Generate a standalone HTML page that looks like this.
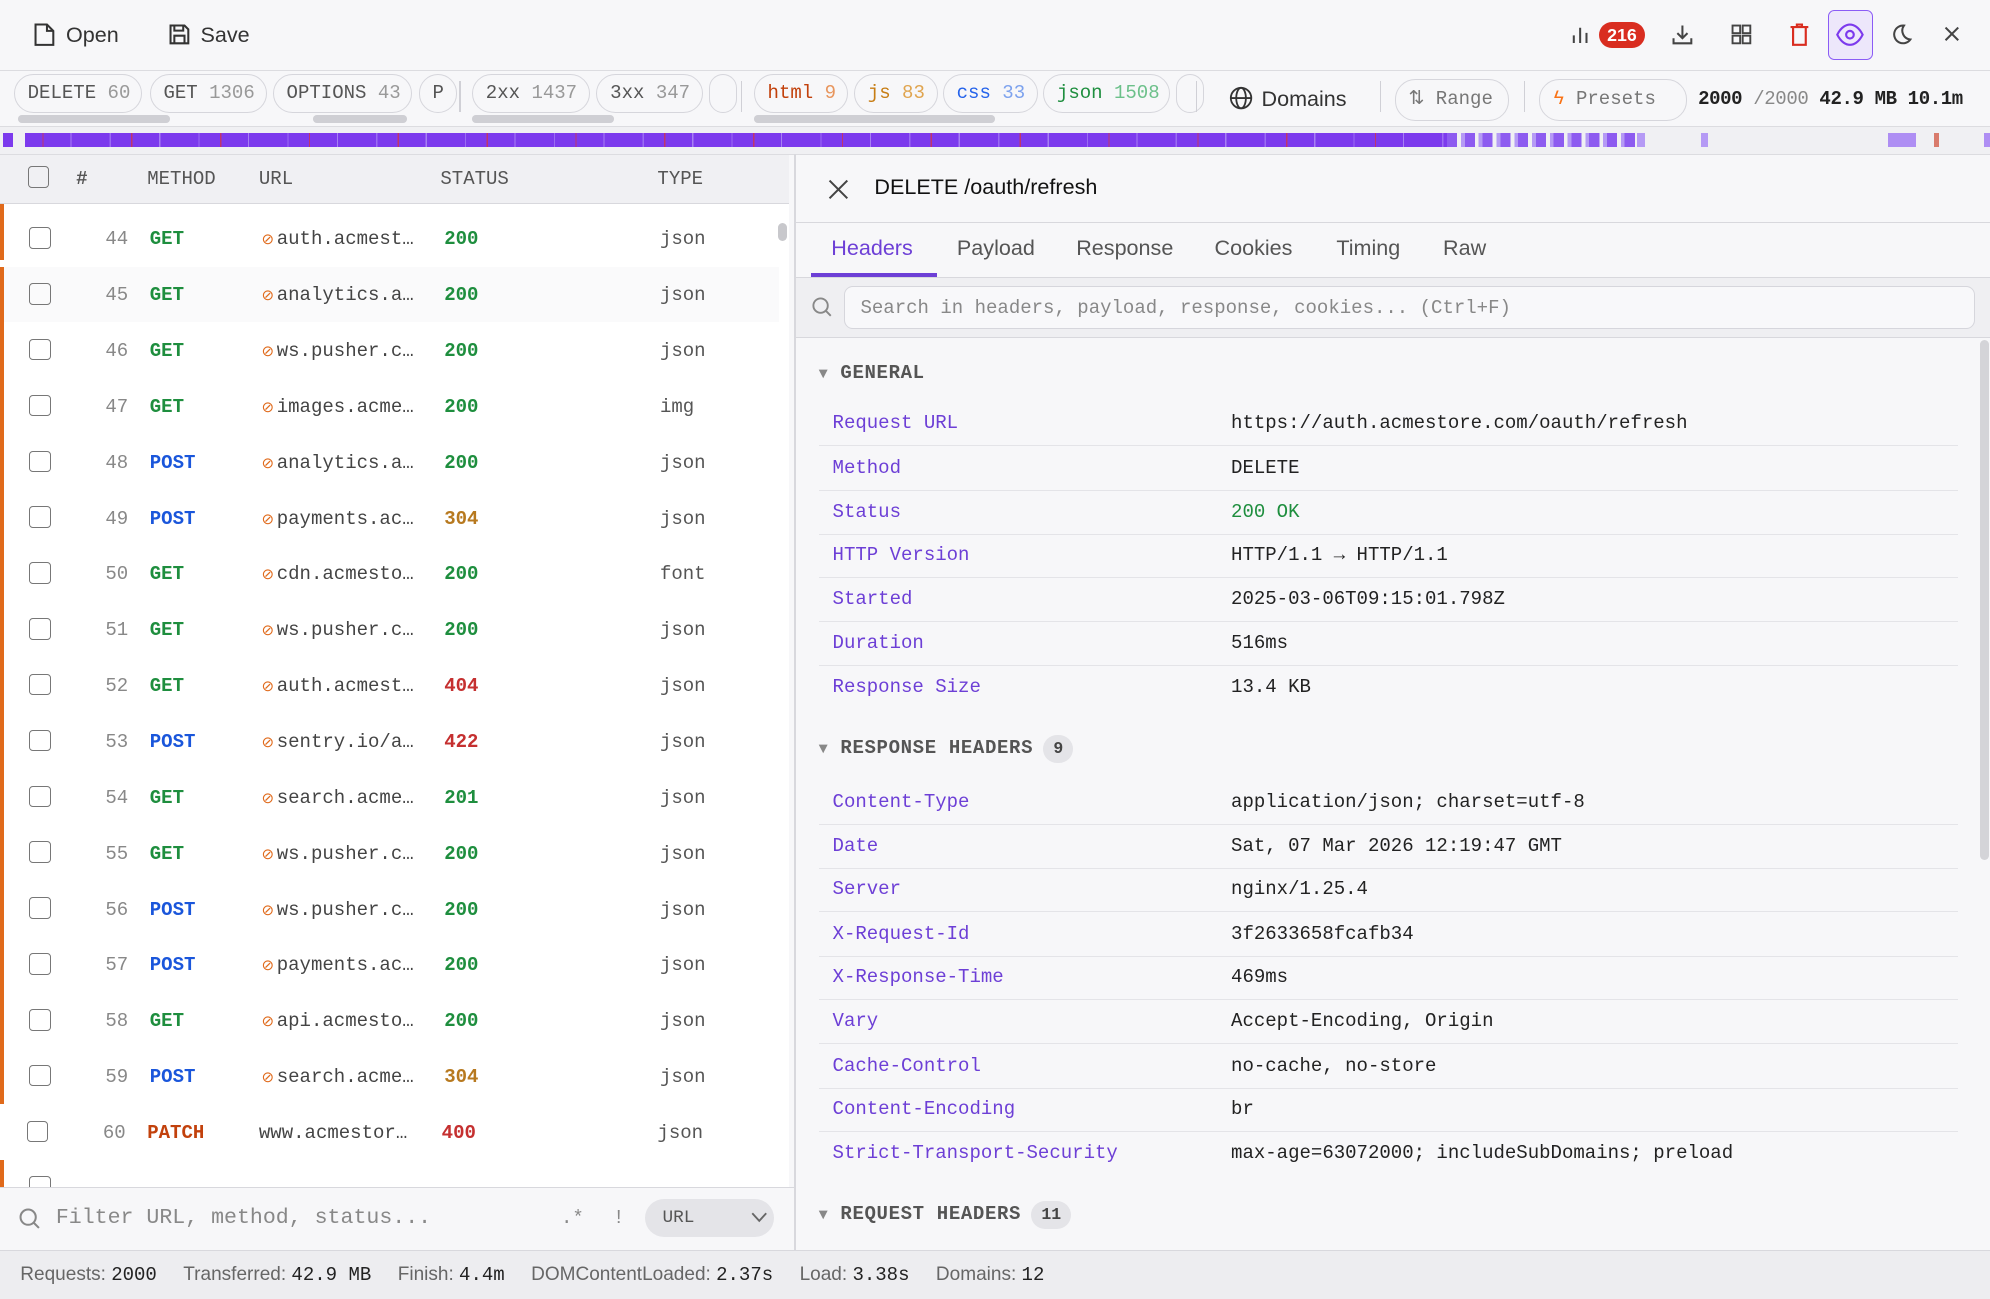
<!DOCTYPE html>
<html><head><meta charset="utf-8"><style>
html,body{margin:0;padding:0}
body{width:1568px;height:1023px;zoom:1.26913;position:relative;overflow:hidden;background:#f7f7f9;font-family:"Liberation Sans",sans-serif;color:#222}
.a{position:absolute}
.m{font-family:"Liberation Mono",monospace}
.chip{position:absolute;top:58px;height:31px;border:1px solid #d6d6dc;border-radius:16px;box-sizing:border-box;font-family:"Liberation Mono",monospace;font-size:15px;line-height:29px;padding:0 10px;color:#555;white-space:nowrap;overflow:hidden;background:#f7f7f9}
.chip span{color:#999}
.sep{position:absolute;top:64px;width:1px;height:24px;background:#d0d0d6}
.row{position:absolute;left:0;width:614px;height:44px;border-bottom:1px solid #eee;background:#fff;font-family:"Liberation Mono",monospace;font-size:15px}
.row .ob{position:absolute;left:0;top:0;width:3px;height:45px;background:#e06a1b}
.cb{position:absolute;left:23px;top:13px;width:17px;height:17px;border:1.5px solid #777;border-radius:3px;box-sizing:border-box}
.row div{position:absolute;top:14px;line-height:18px}
.n{width:101px;text-align:right;color:#888}
.G{color:#1e8e3e;font-weight:bold}.P{color:#1a56db;font-weight:bold}.X{color:#c2410c;font-weight:bold}
.s2{color:#1e8e3e;font-weight:bold}.s3{color:#b7791f;font-weight:bold}.s4{color:#c53030;font-weight:bold}
.u{color:#444}.u i{font-style:normal;color:#e06a1b;font-size:12px;margin-right:2px}
.t{color:#555}
.kv{position:absolute;left:645px;width:898px;height:34px;border-bottom:1px solid #e4e4e8;font-family:"Liberation Mono",monospace;font-size:15px}
.kv b{position:absolute;left:11px;top:8px;font-weight:normal;color:#6d3fd6}
.kv span{position:absolute;left:325px;top:8px;color:#222}
.sh{position:absolute;left:645px;font-family:"Liberation Mono",monospace;font-weight:bold;font-size:15px;color:#555;letter-spacing:.5px}
.sh .bd{display:inline-block;background:#e4e4e8;border-radius:12px;padding:0 8px;font-size:13px;line-height:22px;margin-left:8px;color:#444;letter-spacing:0}
.tab{position:absolute;top:185px;font-size:17px;color:#555}
</style></head><body>
<div class="a" style="left:0;top:0;width:1568px;height:55px;border-bottom:1px solid #dcdce0"></div>
<svg class="a" style="left:26px;top:17px" width="18" height="20" viewBox="0 0 18 20" fill="none" stroke="#333" stroke-width="1.6"><path d="M2 2h9l5 5v11H2z M11 2v5h5"/></svg>
<div class="a" style="left:52px;top:17px;font-size:17px;color:#333">Open</div>
<svg class="a" style="left:132px;top:18px" width="18" height="18" viewBox="0 0 18 18" fill="none" stroke="#333" stroke-width="1.6"><path d="M2 2h11l3 3v11H2z M5 2v4h7V2 M5 16v-6h8v6"/></svg>
<div class="a" style="left:158px;top:17px;font-size:17px;color:#333">Save</div>
<svg class="a" style="left:1237px;top:19px" width="16" height="16" viewBox="0 0 16 16" stroke="#444" stroke-width="1.6"><path d="M3 15V9M8 15V3M13 15V7"/></svg>
<div class="a" style="left:1260px;top:17px;width:36px;height:21px;border-radius:11px;background:#d92d20;color:#fff;font-size:14px;font-weight:bold;text-align:center;line-height:21px">216</div>
<svg class="a" style="left:1317px;top:18px" width="18" height="18" viewBox="0 0 18 18" fill="none" stroke="#444" stroke-width="1.6"><path d="M9 2v10M5 8l4 4 4-4M2 12v4h14v-4"/></svg>
<svg class="a" style="left:1363px;top:18px" width="18" height="18" viewBox="0 0 18 18" fill="none" stroke="#444" stroke-width="1.5"><rect x="2" y="2" width="6" height="6"/><rect x="10" y="2" width="6" height="6"/><rect x="2" y="10" width="6" height="6"/><rect x="10" y="10" width="6" height="6"/></svg>
<svg class="a" style="left:1409px;top:17px" width="18" height="20" viewBox="0 0 18 20" fill="none" stroke="#d92d20" stroke-width="1.7"><path d="M2 4h14M7 4V2h4v2M4 4v14h10V4"/></svg>
<div class="a" style="left:1440px;top:8px;width:36px;height:39px;border:1px solid #8b5cf6;border-radius:5px;background:#ede7fb;box-sizing:border-box"></div>
<svg class="a" style="left:1447px;top:17px" width="22" height="20" viewBox="0 0 22 20" fill="none" stroke="#7c3aed" stroke-width="1.7"><path d="M1 10C4 4 8 2 11 2s7 2 10 8c-3 6-7 8-10 8S4 16 1 10z"/><circle cx="11" cy="10" r="3"/></svg>
<svg class="a" style="left:1489px;top:18px" width="18" height="18" viewBox="0 0 18 18" fill="none" stroke="#444" stroke-width="1.6"><path d="M11 2a7 7 0 1 0 5 11A7 7 0 0 1 11 2z"/></svg>
<svg class="a" style="left:1531px;top:20px" width="14" height="14" viewBox="0 0 14 14" stroke="#444" stroke-width="1.6"><path d="M2 2l10 10M12 2L2 12"/></svg>
<div class="a" style="left:0;top:56px;width:1568px;height:43px;border-bottom:1px solid #dcdce0"></div>
<div class="chip" style="left:11px;width:101px">DELETE <span>60</span></div>
<div class="chip" style="left:118px;width:92px">GET <span>1306</span></div>
<div class="chip" style="left:215px;width:110px">OPTIONS <span>43</span></div>
<div class="chip" style="left:330px;width:30px">P</div>
<div class="sep" style="left:362px"></div>
<div class="chip" style="left:372px;width:93px">2xx <span>1437</span></div>
<div class="chip" style="left:470px;width:84px">3xx <span>347</span></div>
<div class="chip" style="left:559px;width:22px"></div>
<div class="sep" style="left:584px"></div>
<div class="chip" style="left:594px;width:74px;color:#c2410c">html <span style="color:#e8965e">9</span></div>
<div class="chip" style="left:673px;width:66px;color:#c77d14">js <span style="color:#e0a550">83</span></div>
<div class="chip" style="left:743px;width:75px;color:#2563eb">css <span style="color:#7da2ee">33</span></div>
<div class="chip" style="left:822px;width:100px;color:#1e8e3e">json <span style="color:#6cc08a">1508</span></div>
<div class="chip" style="left:927px;width:14px"></div>
<div class="a" style="left:14px;top:91px;width:120px;height:6px;border-radius:3px;background:#cfcfd4"></div>
<div class="a" style="left:247px;top:91px;width:74px;height:6px;border-radius:3px;background:#cfcfd4"></div>
<div class="a" style="left:372px;top:91px;width:112px;height:6px;border-radius:3px;background:#cfcfd4"></div>
<div class="a" style="left:594px;top:91px;width:190px;height:6px;border-radius:3px;background:#cfcfd4"></div>
<div class="sep" style="left:942px"></div>
<svg class="a" style="left:968px;top:68px" width="19" height="19" viewBox="0 0 20 20" fill="none" stroke="#333" stroke-width="1.5"><circle cx="10" cy="10" r="8.5"/><ellipse cx="10" cy="10" rx="4" ry="8.5"/><path d="M1.5 10h17"/></svg>
<div class="a" style="left:994px;top:68px;font-size:17px;color:#333">Domains</div>
<div class="sep" style="left:1087px"></div>
<div class="chip" style="left:1099px;top:62px;width:90px;height:33px;line-height:31px;color:#777">⇅ Range</div>
<div class="sep" style="left:1201px"></div>
<div class="chip" style="left:1213px;top:62px;width:116px;height:33px;line-height:31px;color:#777"><b style="color:#f97316;font-weight:normal">ϟ</b>  Presets</div>
<div class="a m" style="left:1338px;top:69px;font-size:15px;font-weight:bold;color:#222;white-space:nowrap;letter-spacing:-0.3px">2000 <span style="font-weight:normal;color:#888">/2000</span> 42.9 MB 10.1m</div>
<div class="a" style="left:0;top:100px;width:1568px;height:21px;background:#f0f0f3;border-bottom:1px solid #dcdce0"></div>
<div class="a" style="left:2px;top:105px;width:1288px;height:11px;background:repeating-linear-gradient(90deg,#7c3aed 0 14px,#9b6cf2 14px 15px,#7c3aed 15px 31px,#c0356b 31px 32px,#7c3aed 32px 53px,#a77ff3 53px 54px,#7c3aed 54px 70px)"></div>
<div class="a" style="left:10px;top:105px;width:10px;height:11px;background:#f0f0f3"></div>
<div class="a" style="left:1140px;top:105px;width:150px;height:11px;background:repeating-linear-gradient(90deg,#8d5bf0 0 8px,#f0f0f3 8px 11px,#b59af5 11px 14px)"></div>
<div class="a" style="left:1290px;top:105px;width:6px;height:11px;background:#b59af5"></div>
<div class="a" style="left:1340px;top:105px;width:6px;height:11px;background:#b59af5"></div>
<div class="a" style="left:1488px;top:105px;width:22px;height:11px;background:#ae8ef3"></div>
<div class="a" style="left:1524px;top:105px;width:4px;height:11px;background:#d97b6c"></div>
<div class="a" style="left:1563px;top:105px;width:5px;height:11px;background:#ae8ef3"></div>
<div class="a" style="left:0;top:122px;width:622px;height:38px;background:#f0f0f3;border-bottom:1px solid #d8d8dd"></div>
<div class="cb" style="top:131px;left:22px"></div>
<div class="a m" style="left:60px;top:132px;font-size:15px;color:#555;font-weight:bold">#</div>
<div class="a m" style="left:116px;top:132px;font-size:15px;color:#555">METHOD</div>
<div class="a m" style="left:204px;top:132px;font-size:15px;color:#555">URL</div>
<div class="a m" style="left:347px;top:132px;font-size:15px;color:#555">STATUS</div>
<div class="a m" style="left:518px;top:132px;font-size:15px;color:#555">TYPE</div>
<div class="a" style="left:0;top:161px;width:622px;height:774px;background:#fff;overflow:hidden">
<div style="position:relative;top:5px">
<div class="row" style="top:0"><div class="ob" style="top:-6px"></div><span class="cb"></span><div class="n">44</div><div class="G" style="left:118px">GET</div><div class="u" style="left:206px"><i>⊘</i>auth.acmest…</div><div class="s2" style="left:350px">200</div><div class="t" style="left:520px">json</div></div>
<div class="row" style="top:44px;background:#fafafb"><div class="ob"></div><span class="cb"></span><div class="n">45</div><div class="G" style="left:118px">GET</div><div class="u" style="left:206px"><i>⊘</i>analytics.a…</div><div class="s2" style="left:350px">200</div><div class="t" style="left:520px">json</div></div>
<div class="row" style="top:88px"><div class="ob"></div><span class="cb"></span><div class="n">46</div><div class="G" style="left:118px">GET</div><div class="u" style="left:206px"><i>⊘</i>ws.pusher.c…</div><div class="s2" style="left:350px">200</div><div class="t" style="left:520px">json</div></div>
<div class="row" style="top:132px"><div class="ob"></div><span class="cb"></span><div class="n">47</div><div class="G" style="left:118px">GET</div><div class="u" style="left:206px"><i>⊘</i>images.acme…</div><div class="s2" style="left:350px">200</div><div class="t" style="left:520px">img</div></div>
<div class="row" style="top:176px"><div class="ob"></div><span class="cb"></span><div class="n">48</div><div class="P" style="left:118px">POST</div><div class="u" style="left:206px"><i>⊘</i>analytics.a…</div><div class="s2" style="left:350px">200</div><div class="t" style="left:520px">json</div></div>
<div class="row" style="top:220px"><div class="ob"></div><span class="cb"></span><div class="n">49</div><div class="P" style="left:118px">POST</div><div class="u" style="left:206px"><i>⊘</i>payments.ac…</div><div class="s3" style="left:350px">304</div><div class="t" style="left:520px">json</div></div>
<div class="row" style="top:264px"><div class="ob"></div><span class="cb"></span><div class="n">50</div><div class="G" style="left:118px">GET</div><div class="u" style="left:206px"><i>⊘</i>cdn.acmesto…</div><div class="s2" style="left:350px">200</div><div class="t" style="left:520px">font</div></div>
<div class="row" style="top:308px"><div class="ob"></div><span class="cb"></span><div class="n">51</div><div class="G" style="left:118px">GET</div><div class="u" style="left:206px"><i>⊘</i>ws.pusher.c…</div><div class="s2" style="left:350px">200</div><div class="t" style="left:520px">json</div></div>
<div class="row" style="top:352px"><div class="ob"></div><span class="cb"></span><div class="n">52</div><div class="G" style="left:118px">GET</div><div class="u" style="left:206px"><i>⊘</i>auth.acmest…</div><div class="s4" style="left:350px">404</div><div class="t" style="left:520px">json</div></div>
<div class="row" style="top:396px"><div class="ob"></div><span class="cb"></span><div class="n">53</div><div class="P" style="left:118px">POST</div><div class="u" style="left:206px"><i>⊘</i>sentry.io/a…</div><div class="s4" style="left:350px">422</div><div class="t" style="left:520px">json</div></div>
<div class="row" style="top:440px"><div class="ob"></div><span class="cb"></span><div class="n">54</div><div class="G" style="left:118px">GET</div><div class="u" style="left:206px"><i>⊘</i>search.acme…</div><div class="s2" style="left:350px">201</div><div class="t" style="left:520px">json</div></div>
<div class="row" style="top:484px"><div class="ob"></div><span class="cb"></span><div class="n">55</div><div class="G" style="left:118px">GET</div><div class="u" style="left:206px"><i>⊘</i>ws.pusher.c…</div><div class="s2" style="left:350px">200</div><div class="t" style="left:520px">json</div></div>
<div class="row" style="top:528px"><div class="ob"></div><span class="cb"></span><div class="n">56</div><div class="P" style="left:118px">POST</div><div class="u" style="left:206px"><i>⊘</i>ws.pusher.c…</div><div class="s2" style="left:350px">200</div><div class="t" style="left:520px">json</div></div>
<div class="row" style="top:572px"><div class="ob"></div><span class="cb"></span><div class="n">57</div><div class="P" style="left:118px">POST</div><div class="u" style="left:206px"><i>⊘</i>payments.ac…</div><div class="s2" style="left:350px">200</div><div class="t" style="left:520px">json</div></div>
<div class="row" style="top:616px"><div class="ob"></div><span class="cb"></span><div class="n">58</div><div class="G" style="left:118px">GET</div><div class="u" style="left:206px"><i>⊘</i>api.acmesto…</div><div class="s2" style="left:350px">200</div><div class="t" style="left:520px">json</div></div>
<div class="row" style="top:660px"><div class="ob"></div><span class="cb"></span><div class="n">59</div><div class="P" style="left:118px">POST</div><div class="u" style="left:206px"><i>⊘</i>search.acme…</div><div class="s3" style="left:350px">304</div><div class="t" style="left:520px">json</div></div>
<div class="row" style="top:704px"><span class="cb" style="left:21px"></span><div class="n" style="width:99px">60</div><div class="X" style="left:116px">PATCH</div><div class="u" style="left:204px">www.acmestor…</div><div class="s4" style="left:348px">400</div><div class="t" style="left:518px">json</div></div>
<div class="row" style="top:748px"><div class="ob"></div><span class="cb"></span></div>
</div></div>
<div class="a" style="left:613px;top:176px;width:7px;height:14px;border-radius:4px;background:#c8c8cc"></div>
<div class="a" style="left:0;top:935px;width:627px;height:50px;background:#f7f7f9;border-top:1px solid #d8d8dd"></div>
<svg class="a" style="left:14px;top:951px" width="18" height="18" viewBox="0 0 18 18" fill="none" stroke="#888" stroke-width="1.6"><circle cx="8" cy="8" r="6"/><path d="M12.5 12.5l4 4"/></svg>
<div class="a m" style="left:44px;top:950px;font-size:17px;color:#888">Filter URL, method, status...</div>
<div class="a m" style="left:442px;top:951px;font-size:15px;color:#888">.*</div>
<div class="a m" style="left:483px;top:951px;font-size:15px;color:#888">!</div>
<div class="a" style="left:508px;top:945px;width:102px;height:30px;border-radius:15px;background:#e4e4e8"></div>
<div class="a m" style="left:522px;top:952px;font-size:14px;color:#555">URL</div>
<svg class="a" style="left:592px;top:955px" width="13" height="9" viewBox="0 0 13 9" fill="none" stroke="#666" stroke-width="1.5"><path d="M1 1l5.5 6L12 1"/></svg>
<div class="a" style="left:626px;top:121px;width:1px;height:864px;background:#d8d8dd"></div>
<svg class="a" style="left:652px;top:140px" width="18" height="18" viewBox="0 0 18 18" stroke="#444" stroke-width="1.6"><path d="M2 2l14 14M16 2L2 16"/></svg>
<div class="a" style="left:689px;top:137px;font-size:17px;color:#111">DELETE /oauth/refresh</div>
<div class="a" style="left:627px;top:175px;width:941px;height:1px;background:#d8d8dd"></div>
<div class="tab" style="left:655px;color:#6d3fd6">Headers</div>
<div class="a" style="left:639px;top:215px;width:99px;height:3px;background:#6d3fd6"></div>
<div class="tab" style="left:754px">Payload</div>
<div class="tab" style="left:848px">Response</div>
<div class="tab" style="left:957px">Cookies</div>
<div class="tab" style="left:1053px">Timing</div>
<div class="tab" style="left:1137px">Raw</div>
<div class="a" style="left:627px;top:218px;width:941px;height:48px;background:#efeff2;border-top:1px solid #d8d8dd;border-bottom:1px solid #d8d8dd;box-sizing:border-box"></div>
<svg class="a" style="left:639px;top:233px" width="17" height="17" viewBox="0 0 18 18" fill="none" stroke="#888" stroke-width="1.6"><circle cx="8" cy="8" r="6"/><path d="M12.5 12.5l4 4"/></svg>
<div class="a" style="left:665px;top:225px;width:891px;height:34px;border:1px solid #d6d6dc;border-radius:7px;background:#f8f8fa;box-sizing:border-box"></div>
<div class="a m" style="left:678px;top:234px;font-size:15px;color:#888">Search in headers, payload, response, cookies... (Ctrl+F)</div>
<div class="a" style="left:1560px;top:268px;width:7px;height:410px;border-radius:4px;background:#d4d4d8"></div>
<div class="sh" style="top:285px"><span style="color:#888;font-size:12px">▼</span> GENERAL</div>
<div class="kv" style="top:317px"><b>Request URL</b><span>https://auth.acmestore.com/oauth/refresh</span></div>
<div class="kv" style="top:352px"><b>Method</b><span>DELETE</span></div>
<div class="kv" style="top:387px"><b>Status</b><span style="color:#1e8e3e">200 OK</span></div>
<div class="kv" style="top:421px"><b>HTTP Version</b><span>HTTP/1.1 → HTTP/1.1</span></div>
<div class="kv" style="top:455px"><b>Started</b><span>2025-03-06T09:15:01.798Z</span></div>
<div class="kv" style="top:490px"><b>Duration</b><span>516ms</span></div>
<div class="kv" style="top:525px;border:none"><b>Response Size</b><span>13.4 KB</span></div>
<div class="sh" style="top:579px"><span style="color:#888;font-size:12px">▼</span> RESPONSE HEADERS<span class="bd">9</span></div>
<div class="kv" style="top:615px"><b>Content-Type</b><span>application/json; charset=utf-8</span></div>
<div class="kv" style="top:650px"><b>Date</b><span>Sat, 07 Mar 2026 12:19:47 GMT</span></div>
<div class="kv" style="top:684px"><b>Server</b><span>nginx/1.25.4</span></div>
<div class="kv" style="top:719px"><b>X-Request-Id</b><span>3f2633658fcafb34</span></div>
<div class="kv" style="top:753px"><b>X-Response-Time</b><span>469ms</span></div>
<div class="kv" style="top:788px"><b>Vary</b><span>Accept-Encoding, Origin</span></div>
<div class="kv" style="top:823px"><b>Cache-Control</b><span>no-cache, no-store</span></div>
<div class="kv" style="top:857px"><b>Content-Encoding</b><span>br</span></div>
<div class="kv" style="top:892px;border:none"><b>Strict-Transport-Security</b><span>max-age=63072000; includeSubDomains; preload</span></div>
<div class="sh" style="top:946px"><span style="color:#888;font-size:12px">▼</span> REQUEST HEADERS<span class="bd">11</span></div>
<div class="a" style="left:0;top:985px;width:1568px;height:38px;background:#ededf0;border-top:1px solid #d8d8dd;font-size:15px;color:#666">
<div class="a" style="left:16px;top:10px;white-space:nowrap">Requests: <b class="m" style="color:#222;font-weight:normal">2000</b>&nbsp;&nbsp;&nbsp;&nbsp;&nbsp;Transferred: <b class="m" style="color:#222;font-weight:normal">42.9 MB</b>&nbsp;&nbsp;&nbsp;&nbsp;&nbsp;Finish: <b class="m" style="color:#222;font-weight:normal">4.4m</b>&nbsp;&nbsp;&nbsp;&nbsp;&nbsp;DOMContentLoaded: <b class="m" style="color:#222;font-weight:normal">2.37s</b>&nbsp;&nbsp;&nbsp;&nbsp;&nbsp;Load: <b class="m" style="color:#222;font-weight:normal">3.38s</b>&nbsp;&nbsp;&nbsp;&nbsp;&nbsp;Domains: <b class="m" style="color:#222;font-weight:normal">12</b></div>
</div>
</body></html>
